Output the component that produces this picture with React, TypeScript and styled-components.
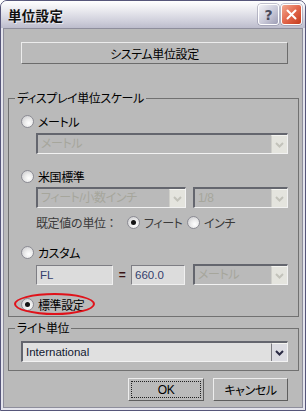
import styled, { createGlobalStyle } from "styled-components"

const GlobalStyle = createGlobalStyle`
  html, body {
    margin: 0;
    padding: 0;
    background: #ffffff;
  }
  body {
    font-family: "Liberation Sans", "Noto Sans CJK JP", sans-serif;
    font-size: 12px;
    font-feature-settings: "palt";
    color: #000;
  }
`

function Chevron({ color }: { color: string }): JSX.Element {
  return (
    <svg width="9" height="6" viewBox="0 0 9 6">
      <path d="M1 1 L4.5 4.5 L8 1" fill="none" stroke={color} strokeWidth="2" />
    </svg>
  )
}

interface ComboProps {
  value: string
  width: number
  enabled?: boolean
}

function Combo({ value, width, enabled }: ComboProps): JSX.Element {
  return (
    <ComboBox $w={width} $enabled={enabled}>
      <ComboText $enabled={enabled}>{value}</ComboText>
      <DropButton $enabled={enabled}>
        <Chevron color={enabled ? "#2a2a44" : "#c2c2ba"} />
      </DropButton>
    </ComboBox>
  )
}

interface RadioProps {
  label: string
  checked?: boolean
}

function Radio({ label, checked }: RadioProps): JSX.Element {
  return (
    <>
      <RadioCircle $checked={checked} />
      <span>{label}</span>
    </>
  )
}

export default function App(): JSX.Element {
  return (
    <>
      <GlobalStyle />
      <Window>
        <TitleBar>
          <Title>単位設定</Title>
          <TitleButtons>
            <HelpButton>?</HelpButton>
            <CloseButton>
              <svg width="11" height="11" viewBox="0 0 11 11">
                <path d="M1.5 1.5 L9.5 9.5 M9.5 1.5 L1.5 9.5" stroke="#fff" strokeWidth="2" strokeLinecap="round" />
              </svg>
            </CloseButton>
          </TitleButtons>
        </TitleBar>
        <Frame>
          <Client>
            <SystemButton>システム単位設定</SystemButton>

            <Group $top={27}>
              <Legend>ディスプレイ単位スケール</Legend>
              <GroupBody $bottom={4}>
                <RadioRow $top={8}>
                  <Radio label="メートル" />
                </RadioRow>
                <Indented $top={4}>
                  <Combo value="メートル" width={252} />
                </Indented>

                <RadioRow $top={14}>
                  <Radio label="米国標準" />
                </RadioRow>
                <Indented $top={3}>
                  <Combo value="フィート/小数インチ" width={150} />
                  <Gap $w={7} />
                  <Combo value="1/8" width={95} />
                </Indented>
                <DefaultRow $top={6}>
                  <DefaultLabel>既定値の単位：</DefaultLabel>
                  <Option $w={60}>
                    <Radio label="フィート" checked />
                  </Option>
                  <Option $w={50}>
                    <Radio label="インチ" />
                  </Option>
                </DefaultRow>

                <RadioRow $top={14}>
                  <Radio label="カスタム" />
                </RadioRow>
                <Indented $top={4}>
                  <TextBox $w={77}>FL</TextBox>
                  <Equals>=</Equals>
                  <TextBox $w={54}>660.0</TextBox>
                  <Gap $w={8} />
                  <Combo value="メートル" width={95} />
                </Indented>

                <RadioRow $top={11}>
                  <Radio label="標準設定" checked />
                  <Ring />
                </RadioRow>
              </GroupBody>
            </Group>

            <Group $top={4}>
              <Legend>ライト単位</Legend>
              <GroupBody $bottom={8}>
                <Indented $top={6} $flush>
                  <Combo value="International" width={267} enabled />
                </Indented>
              </GroupBody>
            </Group>

            <ButtonRow>
              <DialogButton $w={76} $focused>
                OK
              </DialogButton>
              <DialogButton $w={75}>キャンセル</DialogButton>
            </ButtonRow>
          </Client>
        </Frame>
      </Window>
    </>
  )
}

const Window = styled.div`
  width: 306px;
  height: 411px;
  box-sizing: border-box;
  border: 1px solid #56567a;
  border-radius: 7px 7px 0 0;
  overflow: hidden;
  display: flex;
  flex-direction: column;
  background: #e4e4ec;
`

const TitleBar = styled.div`
  height: 27px;
  flex: none;
  display: flex;
  align-items: center;
  justify-content: space-between;
  padding: 0 3px 0 7px;
  background: linear-gradient(#ffffff 0%, #f4f4f7 18%, #e3e3ea 45%, #cfcfdb 75%, #bcbccc 100%);
`

const Title = styled.div`
  font-family: "Noto Sans CJK JP", sans-serif;
  font-weight: 700;
  font-size: 13.5px;
  color: #111;
  text-shadow: 1px 1px 0 rgba(255, 255, 255, 0.6);
  letter-spacing: 0.3px;
`

const TitleButtons = styled.div`
  display: flex;
  gap: 2px;
`

const TitleButtonBase = styled.div`
  width: 21px;
  height: 21px;
  box-sizing: border-box;
  border: 1px solid #ffffff;
  border-radius: 3px;
  display: flex;
  align-items: center;
  justify-content: center;
  box-shadow: 0 0 0 0.5px #8a8aa0;
`

const HelpButton = styled(TitleButtonBase)`
  background: linear-gradient(135deg, #f2f2f7 0%, #c9c9d8 55%, #9d9db5 100%);
  color: #4a4a5c;
  font-family: "DejaVu Sans", sans-serif;
  font-weight: 700;
  font-size: 14px;
`

const CloseButton = styled(TitleButtonBase)`
  background: linear-gradient(135deg, #f3a98f 0%, #e2674c 50%, #c43a1c 100%);
`

const Frame = styled.div`
  flex: 1;
  display: flex;
  padding: 0 2px 2px;
`

const Client = styled.div`
  flex: 1;
  display: flex;
  flex-direction: column;
  border: 1px solid #8e8e9c;
  background: #bababa;
  padding-top: 13px;
  letter-spacing: -0.4px;
`

const SystemButton = styled.div`
  margin-left: 17px;
  width: 267px;
  height: 22px;
  box-sizing: border-box;
  border: 1px solid;
  border-color: #ececec #6c6c6c #6c6c6c #ececec;
  display: flex;
  align-items: center;
  justify-content: center;
  font-family: "Noto Sans CJK JP", sans-serif;
  font-size: 12px;
`

const Group = styled.fieldset<{ $top: number }>`
  margin: ${(p) => p.$top}px 3px 0 4px;
  padding: 0;
  min-width: 0;
  border: 1px solid #717171;
`

const Legend = styled.legend`
  margin-left: 6px;
  padding: 0 2px;
  line-height: 14px;
  font-family: "Noto Sans CJK JP", sans-serif;
  font-size: 12px;
`

const GroupBody = styled.div<{ $bottom: number }>`
  display: flex;
  flex-direction: column;
  padding: 0 10px ${(p) => p.$bottom}px 12px;
`

const RadioRow = styled.div<{ $top: number }>`
  position: relative;
  margin-top: ${(p) => p.$top}px;
  height: 16px;
  display: flex;
  align-items: center;
  gap: 4px;
  font-family: "Noto Sans CJK JP", sans-serif;
  font-size: 12px;
`

const RadioCircle = styled.span<{ $checked?: boolean }>`
  width: 13px;
  height: 13px;
  box-sizing: border-box;
  flex: none;
  border-radius: 50%;
  border: 1px solid #8c8c94;
  background: radial-gradient(circle at 62% 65%, #ffffff 0%, #ececec 40%, #c4c4c8 100%);
  display: flex;
  align-items: center;
  justify-content: center;

  &::after {
    content: "";
    width: 5px;
    height: 5px;
    border-radius: 50%;
    background: #141414;
    display: ${(p) => (p.$checked ? "block" : "none")};
  }
`

const Ring = styled.div`
  position: absolute;
  left: -7px;
  top: -3px;
  width: 81px;
  height: 22px;
  box-sizing: border-box;
  border: 2px solid #e0121a;
  border-radius: 50%;
  pointer-events: none;
`

const Indented = styled.div<{ $top: number; $flush?: boolean }>`
  margin-top: ${(p) => p.$top}px;
  margin-left: ${(p) => (p.$flush ? 0 : 15)}px;
  display: flex;
  align-items: center;
`

const Gap = styled.div<{ $w: number }>`
  width: ${(p) => p.$w}px;
  flex: none;
`

const ComboBox = styled.div<{ $w: number; $enabled?: boolean }>`
  width: ${(p) => p.$w}px;
  height: 21px;
  flex: none;
  box-sizing: border-box;
  display: flex;
  border-style: solid;
  border-width: 2px 1px 1px 2px;
  border-color: #64666e #f2f2f2 #f2f2f2 #64666e;
  background: ${(p) => (p.$enabled ? "#e0e0e0" : "#bababa")};
`

const ComboText = styled.div<{ $enabled?: boolean }>`
  flex: 1;
  min-width: 0;
  overflow: hidden;
  white-space: nowrap;
  padding-left: 3px;
  line-height: 18px;
  letter-spacing: ${(p) => (p.$enabled ? "0" : "-0.4px")};
  font-size: ${(p) => (p.$enabled ? "11.5px" : "12px")};
  color: ${(p) => (p.$enabled ? "#121830" : "#a6a69c")};
`

const DropButton = styled.div<{ $enabled?: boolean }>`
  width: 16px;
  flex: none;
  box-sizing: border-box;
  display: flex;
  align-items: center;
  justify-content: center;
  background: ${(p) => (p.$enabled ? "#dcdce2" : "#e4e4de")};
  border-left: 1px solid ${(p) => (p.$enabled ? "#7a7a80" : "#cfcfca")};
  border-top: 1px solid #f4f4f0;
`

const DefaultRow = styled.div<{ $top: number }>`
  margin-top: ${(p) => p.$top}px;
  margin-left: 15px;
  height: 16px;
  display: flex;
  align-items: center;
  font-family: "Noto Sans CJK JP", sans-serif;
  font-size: 12px;
  color: #3a3a3a;
`

const DefaultLabel = styled.div`
  width: 91px;
  flex: none;
  font-feature-settings: normal;
`

const Option = styled.div<{ $w: number }>`
  width: ${(p) => p.$w}px;
  flex: none;
  display: flex;
  align-items: center;
  gap: 4px;
`

const TextBox = styled.div<{ $w: number }>`
  width: ${(p) => p.$w}px;
  height: 20px;
  flex: none;
  box-sizing: border-box;
  border-style: solid;
  border-width: 1px;
  border-color: #7e7e84 #f0f0f0 #f0f0f0 #7e7e84;
  background: #dcdcdc;
  padding-left: 3px;
  line-height: 18px;
  letter-spacing: 0;
  font-size: 11.5px;
  color: #34406c;
`

const Equals = styled.div`
  width: 18px;
  flex: none;
  text-align: center;
  font-size: 12px;
  font-weight: 700;
  color: #3a1414;
`

const ButtonRow = styled.div`
  margin-top: 7px;
  padding-right: 14px;
  display: flex;
  justify-content: flex-end;
  gap: 9px;
`

const DialogButton = styled.div<{ $w: number; $focused?: boolean }>`
  position: relative;
  width: ${(p) => p.$w}px;
  height: 23px;
  box-sizing: border-box;
  border: 1px solid;
  border-color: #ededed #5e5e5e #5e5e5e #ededed;
  display: flex;
  align-items: center;
  justify-content: center;
  font-size: 12px;

  &::after {
    content: "";
    position: absolute;
    inset: 2px;
    border: 1px dotted #202020;
    display: ${(p) => (p.$focused ? "block" : "none")};
  }
`
